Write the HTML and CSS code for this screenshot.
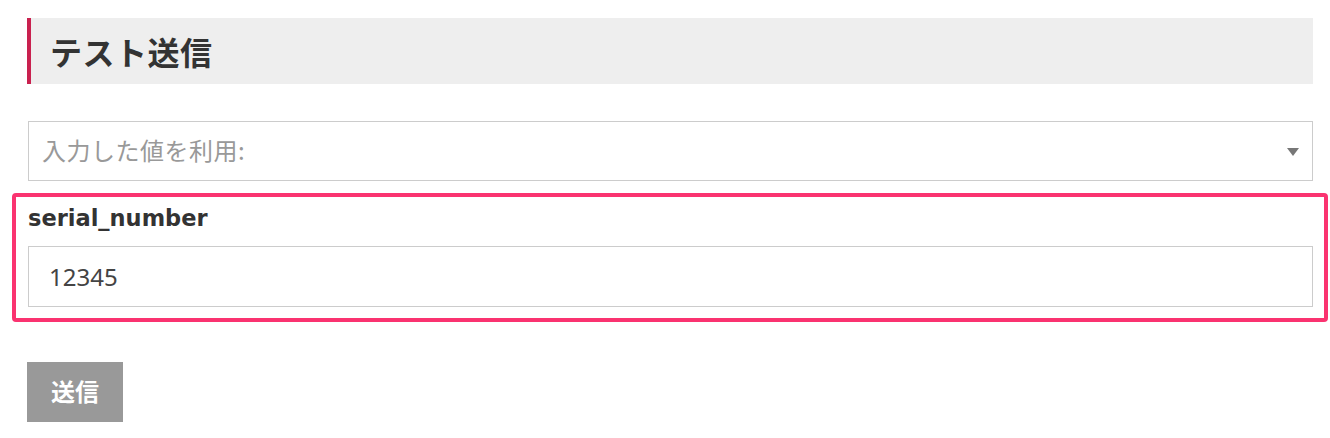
FILE: index.html
```html
<!DOCTYPE html>
<html lang="ja">
<head>
<meta charset="utf-8">
<title>テスト送信</title>
<link rel="stylesheet" href="styles.css">
</head>
<body>
<div class="page">
  <h2 class="section-title">テスト送信</h2>
  <div class="select">
    <span class="select-placeholder">入力した値を利用:</span>
    <span class="select-arrow"></span>
  </div>
  <div class="highlight">
    <label class="field-label">serial_number</label>
    <div class="text-input">12345</div>
  </div>
  <button class="submit">送信</button>
</div>
</body>
</html>
```
FILE: styles.css
```css
html, body {
  margin: 0;
  padding: 0;
  background: #ffffff;
}
body {
  font-family: "Noto Sans", "Noto Sans CJK JP", sans-serif;
  color: #333333;
}
.page {
  padding: 18px 17px 0 27px;
  display: flex;
  flex-direction: column;
}
.section-title {
  margin: 0;
  height: 66px;
  box-sizing: border-box;
  background: #eeeeee;
  border-left: 4px solid #c9214f;
  padding-left: 19px;
  display: flex;
  align-items: center;
  font-family: "Noto Sans CJK JP", sans-serif;
  font-weight: 700;
  font-size: 32px;
  color: #333333;
  letter-spacing: 0.5px;
}
.select {
  margin: 37px 0 0 1px;
  height: 60px;
  box-sizing: border-box;
  border: 1px solid #cccccc;
  display: flex;
  align-items: center;
  justify-content: space-between;
  padding: 0 13px 0 13px;
}
.select-placeholder {
  font-family: "Noto Sans CJK JP", sans-serif;
  font-size: 24px;
  letter-spacing: 0.5px;
  color: #999999;
  margin-top: -3px;
}
.select-arrow {
  width: 0;
  height: 0;
  border-left: 6.5px solid transparent;
  border-right: 6.5px solid transparent;
  border-top: 8px solid #777777;
  margin-top: 2px;
}
.highlight {
  margin: 12px -15px 0 -15px;
  border: 4px solid #fa3370;
  border-radius: 4px;
  padding: 7px 11px 11px 12px;
  display: flex;
  flex-direction: column;
}
.field-label {
  font-family: "DejaVu Sans", sans-serif;
  font-weight: 700;
  font-size: 22.5px;
  color: #333333;
  line-height: 30px;
  height: 42px;
  display: flex;
  align-items: center;
  margin-top: -7px;
  margin-bottom: 7px;
}
.text-input {
  height: 61px;
  box-sizing: border-box;
  border: 1px solid #cccccc;
  display: flex;
  align-items: center;
  padding-left: 20px;
  font-family: "Noto Sans", sans-serif;
  font-size: 24px;
  color: #444444;
}
.submit {
  margin-top: 40px;
  align-self: flex-start;
  width: 96px;
  height: 60px;
  border: none;
  background: #999999;
  color: #ffffff;
  font-family: "Noto Sans CJK JP", sans-serif;
  font-weight: 700;
  font-size: 24px;
  padding: 0 0 4px 0;
  cursor: pointer;
}
```
